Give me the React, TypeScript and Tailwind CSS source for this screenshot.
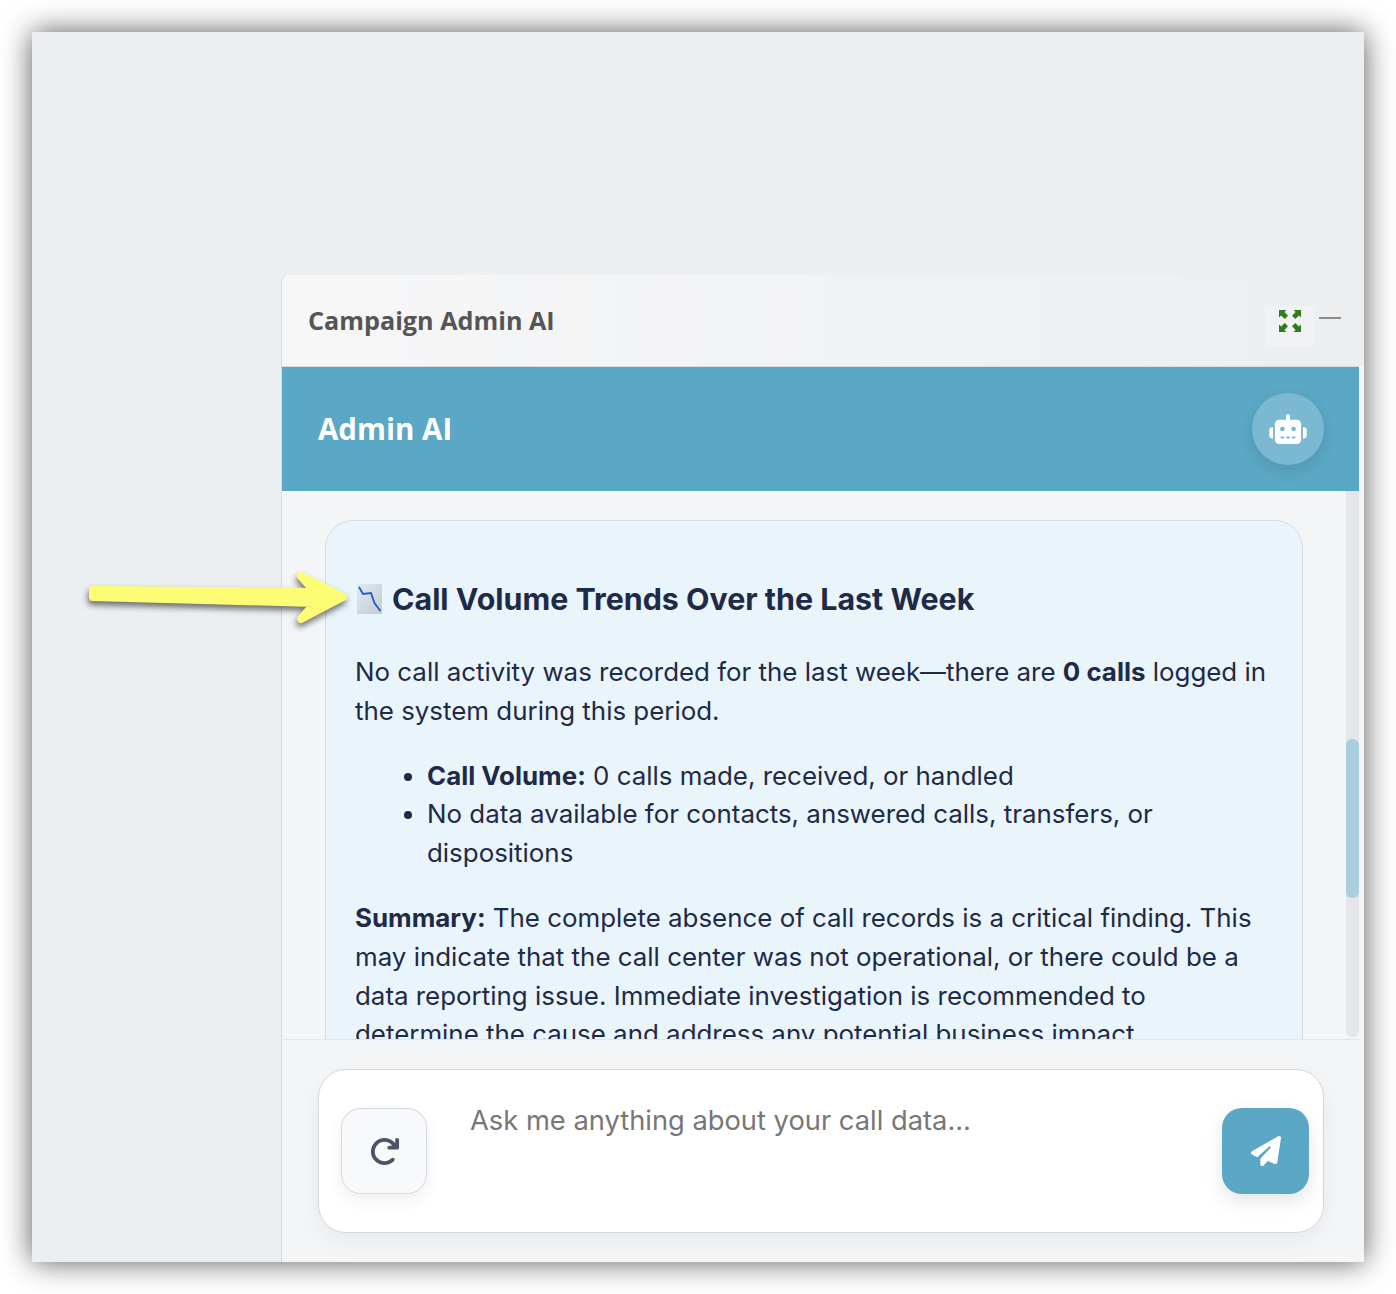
import { FaRobot, FaArrowRotateRight, FaPaperPlane } from "react-icons/fa6";

function ExpandIcon() {
  return (
    <svg viewBox="0 0 22 22" className="h-[22px] w-[22px] text-[#2f7d1f]" fill="currentColor">
      <path d="M0 0h7.5L5.4 2.1 9 5.7 5.7 9 2.1 5.4 0 7.5z" />
      <path d="M22 0h-7.5l2.1 2.1L13 5.7 16.3 9l3.6-3.6L22 7.5z" />
      <path d="M0 22h7.5l-2.1-2.1L9 16.3 5.7 13l-3.6 3.6L0 14.5z" />
      <path d="M22 22h-7.5l2.1-2.1-3.6-3.6 3.3-3.3 3.6 3.6 2.1-2.1z" />
    </svg>
  );
}

function ChartDownIcon() {
  return (
    <svg viewBox="0 0 25 30" className="ml-[2px] h-[30px] w-[25px] shrink-0">
      <defs>
        <linearGradient id="chartBg" x1="0" y1="0" x2="1" y2="1">
          <stop offset="0" stopColor="#e4e9ef" />
          <stop offset="1" stopColor="#c3cbd6" />
        </linearGradient>
      </defs>
      <rect width="25" height="30" fill="url(#chartBg)" />
      <path d="M2 3l4 7 8-1 3.5 10 6 8" fill="none" stroke="#1a5fc8" strokeWidth="1.8" />
    </svg>
  );
}

function YellowArrow() {
  return (
    <svg
      className="absolute left-[48px] top-[530px] drop-shadow-[-1px_4px_3px_rgba(0,0,0,0.55)]"
      width="280"
      height="72"
      viewBox="0 0 280 72"
      fill="none"
    >
      <path
        d="M13 28L235 30L221 14L263 35L221 57L235 41L13 35Z"
        fill="#fdfd75"
        stroke="#fdfd75"
        strokeWidth="8"
        strokeLinejoin="round"
      />
    </svg>
  );
}

export default function App() {
  return (
    <div className="h-[1294px] w-[1396px] bg-white p-8 pb-0 font-['Inter',sans-serif]">
      <div className="relative flex h-[1230px] w-[1332px] justify-end bg-[#eceff2] shadow-[0_0_28px_rgba(0,0,0,0.65)]">
        <div className="mt-[243px] flex w-[1083px] flex-col rounded-tl-lg border-l border-[#d5d9df] bg-[#f4f5f7]">
          <div className="flex h-[91px] shrink-0 items-center justify-between rounded-tl-lg bg-gradient-to-r from-[#f7f7f8] to-[#eceef0] pl-[26px] pr-[23px]">
            <span className="font-['Open_Sans',sans-serif] text-[25.2px] font-bold text-[#555555]">
              Campaign Admin AI
            </span>
            <div className="flex items-start">
              <div className="mt-[10px] flex h-[40px] w-[50px] justify-center bg-[#f1f2f3] pt-[4px]">
                <ExpandIcon />
              </div>
              <div className="ml-[4px] mt-[21px] h-[2px] w-[22px] bg-[#8a8a8a]" />
            </div>
          </div>

          <div className="min-h-0 flex-1 pr-[5px]">
            <div className="flex h-[125px] items-center justify-between border-t border-[#d8dbdf] bg-[#5aa8c5] pl-[36px] pr-[35px]">
              <span className="font-['Open_Sans',sans-serif] text-[29.5px] font-bold text-white">Admin AI</span>
              <div className="flex h-[72px] w-[72px] items-center justify-center rounded-full bg-[#7ab9d1] shadow-[0_6px_16px_rgba(0,0,0,0.1)]">
                <FaRobot className="h-[30px] w-[38px] text-white" />
              </div>
            </div>

            <div className="relative h-[548px] overflow-hidden pl-[43px] pt-[29px]">
              <div className="h-[600px] w-[978px] rounded-[28px] border border-[#d5dce4] bg-[#eaf5fb] px-[29px] pt-[59px] text-[25.9px] leading-[38.8px] text-[#1e2a47]">
                <h3 className="flex items-center gap-[10px] text-[30.4px] font-bold leading-[38px] text-[#1e2a47]">
                  <ChartDownIcon />
                  <span>Call Volume Trends Over the Last Week</span>
                </h3>
                <p className="mt-[35px]">
                  No call activity was recorded for the last week—there are <strong className="font-bold">0 calls</strong> logged in the system during this period.
                </p>
                <ul className="mt-[26px] list-disc pl-[72px]">
                  <li>
                    <strong className="font-bold">Call Volume:</strong> 0 calls made, received, or handled
                  </li>
                  <li>No data available for contacts, answered calls, transfers, or dispositions</li>
                </ul>
                <p className="mt-[26px]">
                  <strong className="font-bold">Summary:</strong> The complete absence of call records is a critical finding. This may indicate that the call center was not operational, or there could be a data reporting issue. Immediate investigation is recommended to determine the cause and address any potential business impact.
                </p>
              </div>
              <div className="absolute right-0 top-0 h-[546px] w-[13px] rounded-b-md bg-[#e4e6eb]">
                <div className="absolute left-0 top-[248px] h-[159px] w-full rounded-md bg-[#a9cedd]" />
              </div>
            </div>

            <div className="border-t border-[#e3e6ea] pl-[36px] pr-[35px] pt-[29px]">
              <div className="flex h-[164px] items-start rounded-[28px] border border-[#d3d8e0] bg-white pl-[22px] pr-[14px] pt-[38px] shadow-[0_8px_24px_rgba(0,0,0,0.05)]">
                <div className="flex h-[86px] w-[86px] shrink-0 items-center justify-center rounded-[20px] border border-[#d3d8e0] bg-[#f8f9fb] shadow-[0_6px_16px_rgba(0,0,0,0.07)]">
                  <FaArrowRotateRight className="h-[31px] w-[31px] text-[#4a5568]" />
                </div>
                <div className="ml-[43px] flex-1 text-[27.3px] leading-[26px] text-[#777777]">Ask me anything about your call data...</div>
                <div className="flex h-[86px] w-[87px] shrink-0 items-center justify-center rounded-[20px] bg-[#5aa8c5] shadow-[0_8px_20px_rgba(0,0,0,0.1)]">
                  <FaPaperPlane className="h-[30px] w-[30px] text-white" />
                </div>
              </div>
            </div>
          </div>
        </div>
        <YellowArrow />
      </div>
    </div>
  );
}
